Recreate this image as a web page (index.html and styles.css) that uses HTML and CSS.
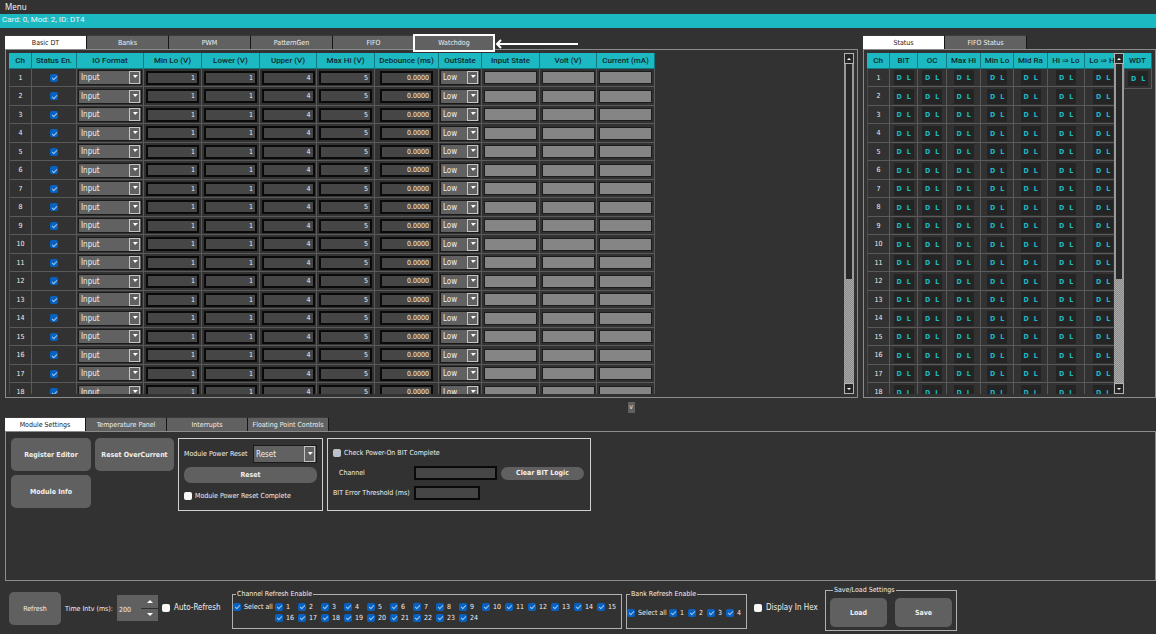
FILE: index.html
```html
<!DOCTYPE html>
<html lang="en">
<head>
<meta charset="utf-8">
<title>Card: 0, Mod: 2, ID: DT4</title>
<link rel="stylesheet" href="styles.css">
</head>
<body>
<nav class="menubar"><button class="menu" type="button">Menu</button></nav>
<header class="titlebar">Card: 0, Mod: 2, ID: DT4</header>

<main class="upper">
  <section class="pane pane-main">
    <div class="tabs" role="tablist">
      <button class="tab active" role="tab">Basic DT</button>
      <button class="tab" role="tab">Banks</button>
      <button class="tab" role="tab">PWM</button>
      <button class="tab" role="tab">PatternGen</button>
      <button class="tab" role="tab">FIFO</button>
      <button class="tab marked" role="tab">Watchdog</button>
      <svg class="pointer" viewBox="0 0 84 10"><path d="M83 5H2M6 1L2 5l4 4" fill="none" stroke="#fff" stroke-width="2"/></svg>
    </div>
    <div class="panel">
      <div class="scroll-view">
        <table class="grid grid-channels">
          <colgroup><col class="w23"><col class="w45"><col class="w67"><col class="w58"><col class="w58"><col class="w57"><col class="w58"><col class="w64"><col class="w43"><col class="w58"><col class="w57"><col class="w58"></colgroup>
          <thead><tr><th>Ch</th><th>Status En.</th><th>IO Format</th><th>Min Lo (V)</th><th>Lower (V)</th><th>Upper (V)</th><th>Max Hi (V)</th><th>Debounce (ms)</th><th>OutState</th><th>Input State</th><th>Volt (V)</th><th>Current (mA)</th></tr></thead>
          <tbody id="channels"></tbody>
        </table>
      </div>
      <div class="scrollbar"><span class="step"><i class="up"></i></span><span class="groove"></span><span class="thumb"></span><span class="step"><i class="down"></i></span></div>
    </div>
  </section>

  <section class="pane pane-status">
    <div class="tabs" role="tablist">
      <button class="tab active" role="tab">Status</button>
      <button class="tab" role="tab">FIFO Status</button>
    </div>
    <div class="panel">
      <div class="scroll-view">
        <table class="grid grid-status">
          <colgroup><col class="w23"><col class="w28"><col class="w29"><col class="w34"><col class="w33"><col class="w34"><col class="w37"><col class="w37"></colgroup>
          <thead><tr><th>Ch</th><th>BIT</th><th>OC</th><th>Max Hi</th><th>Min Lo</th><th>Mid Ra</th><th>Hi ⇒ Lo</th><th>Lo ⇒ Hi</th></tr></thead>
          <tbody id="statuses"></tbody>
        </table>
      </div>
      <div class="scrollbar"><span class="step"><i class="up"></i></span><span class="groove"></span><span class="thumb"></span><span class="step"><i class="down"></i></span></div>
      <table class="grid grid-wdt">
        <thead><tr><th>WDT</th></tr></thead>
        <tbody><tr><td><span class="led"><b>D</b><b>L</b></span></td></tr></tbody>
      </table>
    </div>
  </section>
</main>

<div class="splitter"><button class="collapse" type="button">v</button></div>

<section class="lower">
  <div class="tabs" role="tablist">
    <button class="tab active" role="tab">Module Settings</button>
    <button class="tab" role="tab">Temperature Panel</button>
    <button class="tab" role="tab">Interrupts</button>
    <button class="tab" role="tab">Floating Point Controls</button>
  </div>
  <div class="panel settings">
    <div class="actions">
      <button class="btn" type="button">Register Editor</button>
      <button class="btn" type="button">Reset OverCurrent</button>
      <button class="btn" type="button">Module Info</button>
    </div>
    <div class="box power">
      <div class="power-row">
        <label for="reset-mode">Module Power Reset</label>
        <span class="combo"><select id="reset-mode"><option>Reset</option></select></span>
      </div>
      <button class="btn slim" type="button">Reset</button>
      <label class="check"><input type="checkbox">Module Power Reset Complete</label>
    </div>
    <div class="box bit">
      <label class="check"><input type="checkbox" checked disabled>Check Power-On BIT Complete</label>
      <label class="bit-label indent" for="bit-channel">Channel</label>
      <input class="field" id="bit-channel" type="text">
      <button class="btn slim" type="button">Clear BIT Logic</button>
      <label class="bit-label" for="bit-threshold">BIT Error Threshold (ms)</label>
      <input class="field short" id="bit-threshold" type="text">
    </div>
  </div>
</section>

<footer class="footer">
  <button class="btn refresh" type="button">Refresh</button>
  <label class="interval-label" for="interval">Time Intv (ms):</label>
  <span class="spin"><input id="interval" type="text" value="200"><span class="spin-steps"><button type="button" aria-label="Increase"><i class="up"></i></button><button type="button" aria-label="Decrease"><i class="down"></i></button></span></span>
  <label class="check large auto"><input type="checkbox">Auto-Refresh</label>
  <fieldset class="group channels-group">
    <legend>Channel Refresh Enable</legend>
    <label class="check"><input type="checkbox" checked>Select all</label>
    <div class="channel-checks" id="channel-checks"></div>
  </fieldset>
  <fieldset class="group banks-group">
    <legend>Bank Refresh Enable</legend>
    <label class="check"><input type="checkbox" checked>Select all</label>
    <div class="bank-checks" id="bank-checks"></div>
  </fieldset>
  <label class="check large hex"><input type="checkbox">Display In Hex</label>
  <fieldset class="group files-group">
    <legend>Save/Load Settings</legend>
    <button class="btn" type="button">Load</button>
    <button class="btn" type="button">Save</button>
  </fieldset>
</footer>
<script src="app.js"></script>
</body>
</html>
```
FILE: styles.css
```css
* { box-sizing: border-box; }

html, body { height: 100%; }

body {
  margin: 0;
  display: flex;
  flex-direction: column;
  overflow: hidden;
  background: #323232;
  color: #f0f0f0;
  font: 7px/10px "DejaVu Sans Condensed", "DejaVu Sans", sans-serif;
}

button, input, select { font: inherit; color: inherit; margin: 0; }
button { border: 0; padding: 0; text-align: center; white-space: nowrap; }
label { white-space: nowrap; }

.menubar { height: 14px; flex: none; }
.menu { background: none; font: 8px/14px "Noto Sans", sans-serif; padding-left: 5px; }
.titlebar {
  height: 14px;
  flex: none;
  padding-left: 2px;
  background: #1cb9c3;
  color: #e8f6f7;
  font: 8px/11px Roboto, sans-serif;
}

/* Tabs and panels */
.upper { flex: 1; min-height: 0; display: flex; gap: 5px; padding: 7px 0 0 5px; }
.pane { display: flex; flex-direction: column; min-height: 0; }
.pane-main { flex: 1; min-width: 0; }
.pane-status { flex: none; width: 293px; }
.tabs { display: flex; flex: none; height: 14px; }
.tab {
  width: 82px;
  height: 14px;
  background: #616161;
  border-right: 1px solid #161616;
  border-top: 1px solid #3c3c3c;
}
.tab.active { background: #fff; color: #222; }
.tab.marked { position: relative; border: 2px solid #fff; height: 18px; margin: -1px 0 0 -2px; }
.pointer { width: 84px; height: 10px; margin-top: 4px; position: relative; }
.panel { border: 1px solid #8c8c8c; flex: 1; min-height: 0; display: flex; padding: 3px; }

.scroll-view { flex: 1; min-width: 0; overflow: hidden; }
.scrollbar { width: 10px; flex: none; display: flex; flex-direction: column; }
.step { height: 11px; flex: none; border: 1px solid #b4b4b4; display: grid; place-items: center; background: #262626; }
.groove { flex: 216; border: solid #9a9a9a; border-width: 0 2px; background: #282828; }
.thumb { flex: 104; background: repeating-conic-gradient(#a8a8a8 0 25%, #8c8c8c 0 50%) 0 0 / 2px 2px; }
.up, .down { width: 0; height: 0; border: 2px solid transparent; }
.up { border-top: 0; border-bottom-color: #fff; }
.down { border-bottom: 0; border-top-color: #fff; }

/* Data tables */
.grid { table-layout: fixed; border-collapse: separate; border-spacing: 0; width: 0; }
.grid th {
  height: 16px;
  padding: 0;
  background: #1cb9c3;
  color: #10282b;
  border: solid #0f7a82;
  border-width: 0 1px 1px 0;
  font: 500 8px/15px Roboto, "DejaVu Sans", sans-serif;
  white-space: nowrap;
  overflow: hidden;
}
.grid td { height: 18px; padding: 0 1px; border: solid #5a5a5a; border-width: 0 1px 1px 0; text-align: center; }
.grid tr:nth-child(even) td { height: 19px; }
.grid td:first-child { border-left: 1px solid #4a4a4a; }
.grid input, .grid .combo { vertical-align: middle; }
.w23 { width: 23px; } .w28 { width: 28px; } .w29 { width: 29px; } .w33 { width: 33px; }
.w34 { width: 34px; } .w37 { width: 37px; } .w43 { width: 43px; } .w45 { width: 45px; }
.w57 { width: 57px; } .w58 { width: 58px; } .w64 { width: 64px; } .w67 { width: 67px; }
.grid-channels { width: 646px; }
.grid-status { width: 255px; }
.grid-wdt { width: 28px; align-self: flex-start; }
.grid-wdt td { border-left: 1px solid #4a4a4a; }
.grid-wdt .led { margin: 2px auto; }

.field { background: #464646; border: 2px solid #0a0a0a; height: 14px; padding: 0 2px; width: 100%; display: block; }
.grid .field { text-align: right; width: 53px; margin: 0 auto; line-height: 10px; }
.grid .field.readout { background: #858585; border: 1px solid #1c1c1c; height: 13px; }
.led {
  display: flex;
  gap: 5px;
  width: 20px;
  height: 15px;
  margin: 0 auto;
  padding-left: 3px;
  background: #242424;
  color: #1cb9c3;
  line-height: 17px;
}

.combo { display: block; position: relative; height: 15px; border: 1px solid #1a1a1a; background: #616161; font-size: 8px; }
.combo select { appearance: none; display: block; width: 100%; height: 100%; border: 0; padding: 1px 2px 0; background: none; text-align: left; }
.combo::before { content: ""; position: absolute; right: 1px; top: 0; bottom: 0; width: 9px; border: 1px solid #c4c4c4; pointer-events: none; }
.combo::after { content: ""; position: absolute; right: 3px; top: 4px; border: solid transparent; border-width: 3px 3px 0 2px; border-top-color: #fff; pointer-events: none; }

input[type="checkbox"] {
  appearance: none;
  flex: none;
  width: 8px;
  height: 8px;
  border-radius: 2px;
  background: #f8f8f8;
  display: inline-grid;
  place-items: center;
}
input[type="checkbox"]:checked { background: #0761c0; }
input[type="checkbox"]:disabled { background: #c2c2c2; }
input[type="checkbox"]:checked::before {
  content: "";
  width: 4px;
  height: 2px;
  border: solid #9cc4ea;
  border-width: 0 0 1px 1px;
  transform: rotate(-45deg);
}
.check { display: flex; align-items: center; gap: 3px; }
.large { font-size: 8px; gap: 4px; }

.btn { background: #606060; border-radius: 5px; font-weight: bold; color: #f0f0f0; }

/* Splitter */
.splitter { flex: none; height: 19px; padding-top: 4px; display: flex; justify-content: center; }
.splitter .collapse { width: 7px; height: 11px; background: #606060; line-height: 11px; margin-left: 106px; }

/* Module settings */
.lower { flex: none; height: 164px; padding-left: 5px; display: flex; flex-direction: column; }
.lower .tab { width: 81px; }
.settings { padding: 6px 5px; gap: 4px; align-items: flex-start; }
.actions { display: grid; grid-template-columns: 80px 79px; grid-auto-rows: 33px; gap: 4px; }
.box { border: 1px solid #d0d0d0; height: 73px; }
.power { width: 145px; padding: 6px 5px; display: flex; flex-direction: column; gap: 4px; }
.power-row { display: flex; align-items: center; justify-content: space-between; height: 18px; }
.power-row .combo { width: 64px; height: 18px; }
.power-row .combo::after { top: 6px; }
.slim { height: 17px; border-radius: 7px; }
.power .check { height: 18px; }
.bit {
  width: 264px;
  padding: 4px 5px;
  display: grid;
  grid-template-columns: 77px 83px 83px;
  grid-template-rows: 20px 20px 20px;
  column-gap: 4px;
  align-items: center;
}
.bit .check { grid-column: 1 / -1; }
.bit .slim { height: 13px; }
.indent { padding-left: 6px; }
.short { width: 66px; }

/* Footer */
.footer { flex: none; height: 53px; padding: 9px 9px 0; display: flex; align-items: flex-start; }
.refresh { width: 52px; height: 33px; margin-top: 2px; font-weight: normal; }
.interval-label { width: 56px; padding-left: 4px; margin-top: 14px; }
.spin { display: flex; width: 41px; height: 26px; margin-top: 5px; background: #606060; }
.spin input { width: 24px; border: 0; padding: 3px 2px 0; background: none; }
.spin-steps { flex: 1; display: grid; gap: 1px; background: #303030; }
.spin-steps button { background: #606060; display: grid; place-items: center; }
.spin .up, .spin .down { border-width: 3px; }
.spin .up { border-top: 0; }
.spin .down { border-bottom: 0; }
.auto { margin: 13px 0 0 4px; width: 70px; }
.group { position: relative; border: 1px solid #b0b0b0; margin: 0; padding: 0; min-width: 0; display: flex; }
.group legend { padding: 0 1px; margin-left: 3px; line-height: 8px; }
.channels-group { width: 390px; height: 39px; padding-top: 3px; }
.channels-group > .check { width: 42px; height: 11px; }
.channels-group, .banks-group { align-items: flex-start; }
.channel-checks { display: grid; grid-template-columns: repeat(15, 23px); grid-auto-rows: 11px; }
.banks-group { width: 121px; height: 39px; margin-left: 4px; padding-top: 3px; }
.banks-group > .check { width: 42px; height: 23px; }
.bank-checks { display: grid; grid-template-columns: repeat(4, 19px); grid-auto-rows: 23px; }
.hex { margin: 13px 0 0 7px; width: 71px; }
.files-group { width: 132px; height: 45px; gap: 4px; padding: 4px; margin-top: -4px; }
.files-group .btn { width: 59px; height: 29px; }
.files-group .btn + .btn { margin-left: 4px; }
```
FILE: app.js
```js
const CHANNELS = 18;
const field = (ch, name, value) =>
  `<td><input class="field" type="text" aria-label="${name} ${ch}" value="${value}"></td>`;
const readout = (ch, name) =>
  `<td><input class="field readout" type="text" readonly aria-label="${name} ${ch}"></td>`;
const combo = (ch, name, value) =>
  `<td><span class="combo"><select aria-label="${name} ${ch}"><option>${value}</option></select></span></td>`;
const led = '<td><span class="led"><b>D</b><b>L</b></span></td>';
const check = n => `<label class="check"><input type="checkbox" checked>${n}</label>`;
const numbers = count => Array.from({ length: count }, (_, i) => i + 1);

document.getElementById('channels').innerHTML = numbers(CHANNELS).map(ch =>
  `<tr><td>${ch}</td>` +
  `<td><input type="checkbox" checked aria-label="Status enable ${ch}"></td>` +
  combo(ch, 'IO format', 'Input') +
  field(ch, 'Min lo', '1') + field(ch, 'Lower', '1') +
  field(ch, 'Upper', '4') + field(ch, 'Max hi', '5') +
  field(ch, 'Debounce', '0.0000') +
  combo(ch, 'Out state', 'Low') +
  readout(ch, 'Input state') + readout(ch, 'Volt') + readout(ch, 'Current') +
  '</tr>').join('');

document.getElementById('statuses').innerHTML = numbers(CHANNELS).map(ch =>
  `<tr><td>${ch}</td>${led.repeat(7)}</tr>`).join('');

document.getElementById('channel-checks').innerHTML = numbers(24).map(check).join('');
document.getElementById('bank-checks').innerHTML = numbers(4).map(check).join('');
```
